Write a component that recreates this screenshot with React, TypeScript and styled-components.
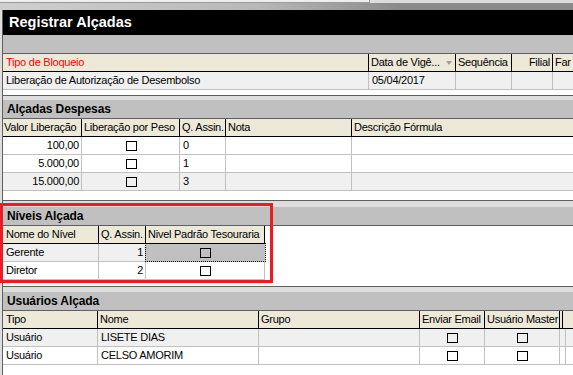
import React from 'react';
import styled, { createGlobalStyle } from 'styled-components';

const GlobalStyle = createGlobalStyle`
  html, body {
    margin: 0;
    padding: 0;
    background: #dedede;
  }
  body {
    font-family: "Liberation Sans", Arial, sans-serif;
    font-size: 11px;
    color: #000;
  }
`;

const Screen = styled.div`
  position: relative;
  width: 573px;
  height: 375px;
  overflow: hidden;
  background: #dedede;
  display: flex;
  flex-direction: column;
`;

const TopStrip = styled.div`
  height: 10px;
  flex: none;
  display: flex;
  flex-direction: column;
`;

const TabLine = styled.div`
  height: 3px;
  display: flex;
  background: #dcdcdc;
`;

const TabEdge = styled.div`
  width: 370px;
  box-sizing: border-box;
  background: #eeeeee;
  border-right: 1px solid #9a9a9a;
  border-bottom: 1px solid #9a9a9a;
`;

const Shade = styled.div`
  flex: 1;
  background: linear-gradient(to right, #cfcfcf 0%, #b8b8b8 45%, #8a8a8a 70%);
`;

const Form = styled.div`
  flex: 1;
  min-height: 0;
  display: flex;
  flex-direction: column;
  margin-left: 2px;
  border-left: 1px solid #5f5f5f;
`;

const TitleBar = styled.div`
  height: 25px;
  flex: none;
  background: #000;
  color: #fff;
  font-weight: bold;
  font-size: 14.5px;
  line-height: 25px;
  padding-left: 6px;
  white-space: nowrap;
`;

const Panel = styled.div<{ $h?: number }>`
  display: flex;
  flex-direction: column;
  box-sizing: border-box;
  ${(p) => (p.$h ? `height: ${p.$h}px; flex: none;` : 'flex: 1; min-height: 0;')}
  border-bottom: ${(p) => (p.$h ? '1px solid #5f5f5f' : 'none')};
`;

const Splitter = styled.div<{ $h: number }>`
  height: ${(p) => p.$h}px;
  flex: none;
  background: #dedede;
`;

const Band = styled.div`
  height: 19px;
  flex: none;
  box-sizing: border-box;
  background: #c0c0c0;
  border-bottom: 1px solid #5f5f5f;
  font-weight: bold;
  font-size: 12px;
  line-height: 18px;
  padding-left: 4px;
  letter-spacing: -0.1px;
  white-space: nowrap;
`;

const Grid = styled.div<{ $compact?: boolean }>`
  flex: 1;
  min-height: 0;
  overflow: hidden;
  background: #fff;
  display: flex;
  flex-direction: column;
  align-items: ${(p) => (p.$compact ? 'flex-start' : 'stretch')};
  letter-spacing: -0.25px;
`;

const HeaderRow = styled.div`
  display: flex;
  flex: none;
  height: 18px;
  box-sizing: border-box;
  background: #ece9d8;
  border-bottom: 1px solid #000;
`;

const HeadCell = styled.div<{ $w?: number; $right?: boolean; $red?: boolean; $pad?: number }>`
  ${(p) => (p.$w ? `width: ${p.$w}px; flex: none;` : 'flex: 1; min-width: 0;')}
  box-sizing: border-box;
  display: flex;
  align-items: center;
  justify-content: ${(p) => (p.$right ? 'flex-end' : 'space-between')};
  padding: 0 ${(p) => (p.$right ? 2 : 0)}px 0 ${(p) => p.$pad ?? 2}px;
  border-right: ${(p) => (p.$w ? '1px solid #000' : 'none')};
  color: ${(p) => (p.$red ? '#ff0000' : '#000')};
  line-height: 17px;
  white-space: nowrap;
  overflow: hidden;
`;

const SortArrow = styled.span`
  width: 0;
  height: 0;
  margin-right: 3px;
  border-left: 3px solid transparent;
  border-right: 3px solid transparent;
  border-top: 4px solid #a0a0a0;
`;

const Row = styled.div<{ $alt?: boolean }>`
  display: flex;
  flex: none;
  height: 18px;
  box-sizing: border-box;
  border-bottom: 1px solid #c0c0c0;
  background: ${(p) => (p.$alt ? '#f0f0f0' : '#fff')};
`;

const Cell = styled.div<{ $w?: number; $align?: 'left' | 'right' | 'center'; $focus?: boolean }>`
  ${(p) => (p.$w ? `width: ${p.$w}px; flex: none;` : 'flex: 1; min-width: 0;')}
  box-sizing: border-box;
  display: flex;
  align-items: center;
  justify-content: ${(p) =>
    p.$align === 'right' ? 'flex-end' : p.$align === 'center' ? 'center' : 'flex-start'};
  padding: 0 2px 0 3px;
  border-right: ${(p) => (p.$w ? '1px solid #c0c0c0' : 'none')};
  line-height: 17px;
  white-space: nowrap;
  overflow: hidden;
  ${(p) => (p.$focus ? 'background: #c0c0c0; outline: 1px dotted #000; overflow: visible;' : '')}
`;

const Check = styled.span`
  display: block;
  width: 11px;
  height: 10px;
  box-sizing: border-box;
  border: 1px solid #000;
`;

const Highlight = styled.div`
  position: absolute;
  left: 0;
  top: 203px;
  width: 273px;
  height: 80px;
  box-sizing: border-box;
  border: 3px solid #ed1c24;
  pointer-events: none;
`;

const despesas = [
  { valor: '100,00', assin: '0' },
  { valor: '5.000,00', assin: '1' },
  { valor: '15.000,00', assin: '3' },
];

const usuarios = ['LISETE DIAS', 'CELSO AMORIM'];

export default function App() {
  return (
    <Screen>
      <GlobalStyle />
      <TopStrip>
        <TabLine>
          <TabEdge />
        </TabLine>
        <Shade />
      </TopStrip>

      <Form>
        <TitleBar>Registrar Alçadas</TitleBar>

        <Panel $h={61}>
          <Band />
          <Grid>
            <HeaderRow>
              <HeadCell $w={366} $pad={3} $red>Tipo de Bloqueio</HeadCell>
              <HeadCell $w={87}>
                Data de Vigê...
                <SortArrow />
              </HeadCell>
              <HeadCell $w={56}>Sequência</HeadCell>
              <HeadCell $w={41} $right>Filial</HeadCell>
              <HeadCell>Far</HeadCell>
            </HeaderRow>
            <Row $alt>
              <Cell $w={366}>Liberação de Autorização de Desembolso</Cell>
              <Cell $w={87}>05/04/2017</Cell>
              <Cell $w={56} />
              <Cell $w={41} />
              <Cell />
            </Row>
          </Grid>
        </Panel>

        <Panel $h={105}>
          <Splitter $h={4} />
          <Band>Alçadas Despesas</Band>
          <Grid>
            <HeaderRow>
              <HeadCell $w={79} $pad={1}>Valor Liberação</HeadCell>
              <HeadCell $w={98}>Liberação por Peso</HeadCell>
              <HeadCell $w={46}>Q. Assin.</HeadCell>
              <HeadCell $w={126}>Nota</HeadCell>
              <HeadCell>Descrição Fórmula</HeadCell>
            </HeaderRow>
            {despesas.map((d, i) => (
              <Row key={d.valor} $alt={i === 2}>
                <Cell $w={79} $align="right">{d.valor}</Cell>
                <Cell $w={98} $align="center"><Check /></Cell>
                <Cell $w={46}>{d.assin}</Cell>
                <Cell $w={126} />
                <Cell />
              </Row>
            ))}
          </Grid>
        </Panel>

        <Panel $h={86}>
          <Splitter $h={6} />
          <Band>Níveis Alçada</Band>
          <Grid $compact>
            <HeaderRow>
              <HeadCell $w={96} $pad={3}>Nome do Nível</HeadCell>
              <HeadCell $w={47}>Q. Assin.</HeadCell>
              <HeadCell $w={119}>Nivel Padrão Tesouraria</HeadCell>
            </HeaderRow>
            <Row $alt>
              <Cell $w={96}>Gerente</Cell>
              <Cell $w={47} $align="right">1</Cell>
              <Cell $w={119} $align="center" $focus><Check /></Cell>
            </Row>
            <Row>
              <Cell $w={96}>Diretor</Cell>
              <Cell $w={47} $align="right">2</Cell>
              <Cell $w={119} $align="center"><Check /></Cell>
            </Row>
          </Grid>
        </Panel>

        <Panel>
          <Splitter $h={5} />
          <Band>Usuários Alçada</Band>
          <Grid>
            <HeaderRow>
              <HeadCell $w={95} $pad={3}>Tipo</HeadCell>
              <HeadCell $w={161}>Nome</HeadCell>
              <HeadCell $w={161}>Grupo</HeadCell>
              <HeadCell $w={65}>Enviar Email</HeadCell>
              <HeadCell $w={75}>Usuário Master</HeadCell>
              <HeadCell $w={3} $pad={0} />
              <HeadCell />
            </HeaderRow>
            {usuarios.map((nome, i) => (
              <Row key={nome} $alt={i === 0}>
                <Cell $w={95}>Usuário</Cell>
                <Cell $w={161}>{nome}</Cell>
                <Cell $w={161} />
                <Cell $w={65} $align="center"><Check /></Cell>
                <Cell $w={75} $align="center"><Check /></Cell>
                <Cell $w={3} />
                <Cell />
              </Row>
            ))}
          </Grid>
        </Panel>
      </Form>

      <Highlight />
    </Screen>
  );
}
